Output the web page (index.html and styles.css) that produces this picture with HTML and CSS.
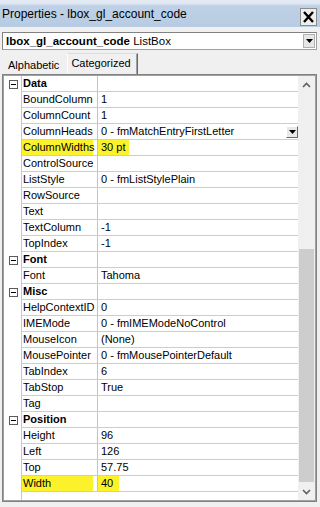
FILE: index.html
```html
<!DOCTYPE html>
<html lang="en">
<head>
    <meta charset="UTF-8">
    <meta name="viewport" content="width=device-width, initial-scale=1.0">
    <title>Properties - lbox_gl_account_code</title>
    <link rel="stylesheet" href="styles.css">
</head>
<body>
    <div class="window">
        <div class="titlebar">
            <span class="title">Properties - lbox_gl_account_code</span>
            <button class="close" type="button">
                <svg width="11" height="12" viewBox="0 0 11 12">
                    <path d="M1 1 L10 11 M10 1 L1 11" stroke="#000" stroke-width="2.4" fill="none"/>
                </svg>
            </button>
        </div>

        <div class="object-select">
            <span class="obj-name">lbox_gl_account_code</span>&nbsp;<span>ListBox</span>
            <span class="drop-btn">
                <svg width="7" height="4" viewBox="0 0 7 4"><path d="M0 0 H7 L3.5 4 Z" fill="#000"/></svg>
            </span>
        </div>

        <div class="tabs">
            <span class="tab">Alphabetic</span>
            <span class="tab active">Categorized</span>
        </div>

        <div class="grid">
            <div class="rows">
                <div class="row cat"><span class="gutter"><span class="toggle"></span></span><span class="name">Data</span><span class="value"></span></div>
                <div class="row"><span class="gutter"></span><span class="name">BoundColumn</span><span class="value">1</span></div>
                <div class="row"><span class="gutter"></span><span class="name">ColumnCount</span><span class="value">1</span></div>
                <div class="row"><span class="gutter"></span><span class="name">ColumnHeads</span><span class="value">0 - fmMatchEntryFirstLetter<span class="cell-drop"><svg width="7" height="4" viewBox="0 0 7 4"><path d="M0 0 H7 L3.5 4 Z" fill="#000"/></svg></span></span></div>
                <div class="row"><span class="gutter"></span><span class="name"><span class="mark mark-name">ColumnWidths</span></span><span class="value"><span class="mark mark-pt">30 pt</span></span></div>
                <div class="row"><span class="gutter"></span><span class="name">ControlSource</span><span class="value"></span></div>
                <div class="row"><span class="gutter"></span><span class="name">ListStyle</span><span class="value">0 - fmListStylePlain</span></div>
                <div class="row"><span class="gutter"></span><span class="name">RowSource</span><span class="value"></span></div>
                <div class="row"><span class="gutter"></span><span class="name">Text</span><span class="value"></span></div>
                <div class="row"><span class="gutter"></span><span class="name">TextColumn</span><span class="value">-1</span></div>
                <div class="row"><span class="gutter"></span><span class="name">TopIndex</span><span class="value">-1</span></div>
                <div class="row cat"><span class="gutter"><span class="toggle"></span></span><span class="name">Font</span><span class="value"></span></div>
                <div class="row"><span class="gutter"></span><span class="name">Font</span><span class="value">Tahoma</span></div>
                <div class="row cat"><span class="gutter"><span class="toggle"></span></span><span class="name">Misc</span><span class="value"></span></div>
                <div class="row"><span class="gutter"></span><span class="name">HelpContextID</span><span class="value">0</span></div>
                <div class="row"><span class="gutter"></span><span class="name">IMEMode</span><span class="value">0 - fmIMEModeNoControl</span></div>
                <div class="row"><span class="gutter"></span><span class="name">MouseIcon</span><span class="value">(None)</span></div>
                <div class="row"><span class="gutter"></span><span class="name">MousePointer</span><span class="value">0 - fmMousePointerDefault</span></div>
                <div class="row"><span class="gutter"></span><span class="name">TabIndex</span><span class="value">6</span></div>
                <div class="row"><span class="gutter"></span><span class="name">TabStop</span><span class="value">True</span></div>
                <div class="row"><span class="gutter"></span><span class="name">Tag</span><span class="value"></span></div>
                <div class="row cat"><span class="gutter"><span class="toggle"></span></span><span class="name">Position</span><span class="value"></span></div>
                <div class="row"><span class="gutter"></span><span class="name">Height</span><span class="value">96</span></div>
                <div class="row"><span class="gutter"></span><span class="name">Left</span><span class="value">126</span></div>
                <div class="row"><span class="gutter"></span><span class="name">Top</span><span class="value">57.75</span></div>
                <div class="row"><span class="gutter"></span><span class="name"><span class="mark mark-name">Width</span></span><span class="value"><span class="mark mark-num">40</span></span></div>
            </div>

            <div class="scrollbar">
                <span class="sb-btn">
                    <svg width="9" height="6" viewBox="0 0 9 6"><path d="M1 5 L4.5 1.5 L8 5" stroke="#606060" stroke-width="1.6" fill="none"/></svg>
                </span>
                <div class="track"><div class="thumb"></div></div>
                <span class="sb-btn">
                    <svg width="9" height="6" viewBox="0 0 9 6"><path d="M1 1 L4.5 4.5 L8 1" stroke="#606060" stroke-width="1.6" fill="none"/></svg>
                </span>
            </div>
        </div>
    </div>
</body>
</html>
```

FILE: styles.css
```css
/* Window */
body {
    margin: 0;
    background: #f0f0f0;
    font-family: "Liberation Sans", Arial, sans-serif;
    color: #000;
}
.window {
    width: 320px;
    height: 507px;
    overflow: hidden;
    display: flex;
    flex-direction: column;
}

/* Title bar */
.titlebar {
    height: 27px;
    flex: none;
    display: flex;
    align-items: flex-start;
    background: linear-gradient(#e3eaf3 0, #e3eaf3 3px, #bfd1e6 6px, #b7cbe2 100%);
}
.title {
    flex: 1;
    font-size: 12px;
    padding: 7px 0 0 2px;
}
.close {
    width: 17px;
    height: 18px;
    margin: 8px 3px 0 0;
    padding: 0;
    border: 1px solid #8c8c8c;
    background: #eeeeee;
    display: flex;
    align-items: center;
    justify-content: center;
}

/* Object combo */
.object-select {
    height: 18px;
    flex: none;
    box-sizing: border-box;
    margin: 5px 3px 0 2px;
    padding-left: 3px;
    border: 1px solid #a0a0a0;
    border-top-color: #828282;
    border-left-color: #828282;
    background: #fff;
    display: flex;
    align-items: center;
    font-size: 11.5px;
}
.obj-name {
    font-weight: bold;
}
.drop-btn {
    margin-left: auto;
    margin-right: 1px;
    width: 12px;
    height: 14px;
    box-sizing: border-box;
    border: 1px solid #b0b0b0;
    background: #e6e6e6;
    display: flex;
    align-items: center;
    justify-content: center;
}

/* Tabs */
.tabs {
    height: 21px;
    flex: none;
    margin-top: 3px;
    padding-left: 3px;
    display: flex;
    align-items: flex-end;
    font-size: 11px;
}
.tab {
    height: 18px;
    line-height: 18px;
    padding: 0 8px 0 5px;
}
.tab.active {
    height: 21px;
    line-height: 18px;
    box-sizing: border-box;
    padding: 0 6px 0 3px;
    border-top: 1px solid #dcdcdc;
    border-left: 1px solid #fff;
    border-right: 1px solid #696969;
    box-shadow: inset -1px 0 0 #a0a0a0;
}

/* Property grid */
.grid {
    height: 428px;
    flex: none;
    box-sizing: border-box;
    margin: 0 3px 0 2px;
    border: 1px solid #828282;
    display: flex;
}
.rows {
    flex: 1;
    border: 1px solid #a0a0a0;
    border-right: none;
    background: linear-gradient(to right, #fff 17px, #c8c8c8 17px, #c8c8c8 18px, #fff 18px);
}
.row {
    display: grid;
    grid-template-columns: 18px 76px 1fr;
    height: 16px;
    font-size: 11px;
    line-height: 15px;
}
.name,
.value {
    border-bottom: 1px solid #cdcdcd;
    white-space: nowrap;
    overflow: hidden;
}
.name {
    border-right: 1px solid #c4c4c4;
    padding-left: 1px;
}
.value {
    display: flex;
    padding-left: 3px;
}
.cat .name {
    font-weight: bold;
}
.toggle {
    display: block;
    position: relative;
    width: 9px;
    height: 9px;
    box-sizing: border-box;
    margin: 4px 0 0 5px;
    border: 1px solid #5a5a5a;
    background: #fff;
}
.toggle::after {
    content: "";
    position: absolute;
    left: 1px;
    top: 3px;
    width: 5px;
    height: 1px;
    background: #000;
}
.cell-drop {
    margin: 2px 0 0 auto;
    width: 12px;
    height: 12px;
    box-sizing: border-box;
    border: 1px solid #fff;
    border-right-color: #696969;
    border-bottom-color: #696969;
    background: #e8e8e8;
    display: flex;
    align-items: center;
    justify-content: center;
}

/* Highlighter marks */
.mark {
    display: inline-block;
    height: 15px;
    background: #fbf22c;
}
.name .mark {
    margin-left: -1px;
    padding-left: 1px;
}
.value .mark {
    margin-left: -3px;
    padding-left: 3px;
}
.mark-name {
    width: 70px;
}
.mark-pt {
    width: 28px;
}
.mark-num {
    width: 18px;
}

/* Scrollbar */
.scrollbar {
    width: 17px;
    display: flex;
    flex-direction: column;
    background: #f0f0f0;
    border: 1px solid #a0a0a0;
    border-left: none;
}
.sb-btn {
    height: 17px;
    flex: none;
    display: flex;
    align-items: center;
    justify-content: center;
}
.track {
    flex: 1;
    display: flex;
    flex-direction: column;
    padding: 156px 1px 1px;
}
.thumb {
    flex: 1;
    background: #cdcdcd;
}
```
